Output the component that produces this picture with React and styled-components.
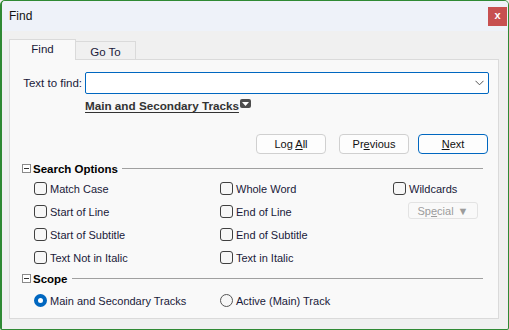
import React from 'react';
import styled, { createGlobalStyle } from 'styled-components';

const GlobalStyle = createGlobalStyle`
  html, body {
    margin: 0;
    padding: 0;
    background: #f0f0f0;
  }
  body {
    font-family: "Liberation Sans", Arial, sans-serif;
  }
  * {
    box-sizing: border-box;
  }
`;

const Window = styled.div`
  width: 509px;
  height: 330px;
  border: 1px solid #2f8a34;
  border-left-width: 2px;
  border-radius: 5px 5px 2px 2px;
  background: #f0f0f0;
  display: flex;
  flex-direction: column;
  overflow: hidden;
`;

const TitleBar = styled.div`
  height: 30px;
  flex: none;
  background: #eef2f9;
  display: flex;
  align-items: center;
  justify-content: space-between;
  padding-left: 7px;
  padding-right: 1px;
`;

const Title = styled.span`
  font-size: 12px;
  color: #111;
`;

const CloseButton = styled.div`
  width: 19px;
  height: 19px;
  background: #c75050;
  color: #fff;
  font-size: 11px;
  font-weight: bold;
  display: flex;
  align-items: center;
  justify-content: center;
  line-height: 1;
  padding-bottom: 1px;
`;

const Body = styled.div`
  flex: 1;
  display: flex;
  flex-direction: column;
  padding: 8px 9px 10px 7px;
`;

const Tabs = styled.div`
  display: flex;
  align-items: flex-end;
  height: 21px;
  margin-bottom: -1px;
`;

const Tab = styled.div`
  position: relative;
  z-index: ${(p) => (p.$active ? 2 : 1)};
  width: ${(p) => p.$width}px;
  height: ${(p) => (p.$active ? 21 : 19)}px;
  background: ${(p) => (p.$active ? '#f9f9f9' : '#f0f0f0')};
  border: 1px solid #dadada;
  border-bottom: ${(p) => (p.$active ? 'none' : '1px solid #dadada')};
  border-left: ${(p) => (p.$first ? '1px solid #dadada' : 'none')};
  font-size: 11.5px;
  color: #1a1a3a;
  display: flex;
  justify-content: center;
  padding-top: ${(p) => (p.$active ? 3 : 4)}px;
`;

const Panel = styled.div`
  flex: 1;
  background: #f9f9f9;
  border: 1px solid #dadada;
  display: flex;
  flex-direction: column;
  padding: 12px 9px 0 0;
`;

const FindRow = styled.div`
  display: grid;
  grid-template-columns: 75px 1fr;
  align-items: center;
  height: 22px;
`;

const Label = styled.label`
  font-size: 11.5px;
  color: #1a1a3a;
  text-align: right;
  padding-right: 3px;
`;

const ComboBox = styled.div`
  height: 22px;
  border: 1px solid #0067c0;
  border-radius: 2px;
  background: #fff;
  display: flex;
  align-items: center;
  justify-content: flex-end;
  padding-right: 4px;
`;

const ScopeLinkRow = styled.div`
  height: 15px;
  margin-top: 4px;
  padding-left: 75px;
  display: flex;
  align-items: center;
  gap: 1px;
`;

const ScopeLink = styled.span`
  font-size: 11.7px;
  font-weight: bold;
  color: #333;
  text-decoration: underline;
  text-underline-offset: 2px;
`;

const DropIcon = styled.span`
  width: 11px;
  height: 9px;
  border-radius: 2px;
  background: #4d4d4d;
  display: flex;
  align-items: center;
  justify-content: center;
  margin-top: -4px;
`;

const ButtonRow = styled.div`
  display: flex;
  justify-content: flex-end;
  margin-top: 21px;
  height: 20px;
  padding-right: 1px;
`;

const Button = styled.div`
  width: 70px;
  height: 20px;
  margin-left: ${(p) => p.$gap || 0}px;
  background: #fdfdfd;
  border: 1px solid ${(p) => (p.$primary ? '#0067c0' : '#d0d0d0')};
  border-radius: 4px;
  font-size: 11px;
  color: #111;
  display: flex;
  align-items: center;
  justify-content: center;
`;

const Key = styled.span`
  text-decoration: underline;
  text-underline-offset: 1px;
`;

const SectionHeader = styled.div`
  display: flex;
  align-items: center;
  height: 13px;
  margin-top: ${(p) => p.$top}px;
  padding-left: 12px;
  padding-right: 6px;
`;

const Collapse = styled.span`
  width: 9px;
  height: 9px;
  border: 1px solid #8a8a8a;
  background: #fff;
  display: flex;
  align-items: center;
  justify-content: center;
  margin-right: 2px;

  &::after {
    content: '';
    width: 5px;
    height: 1px;
    background: #333;
  }
`;

const SectionTitle = styled.span`
  font-size: 11.5px;
  font-weight: bold;
  color: #000;
`;

const Rule = styled.span`
  flex: 1;
  height: 1px;
  background: #a0a0a0;
  margin-left: 4px;
`;

const OptionGrid = styled.div`
  display: grid;
  grid-template-columns: 186px 173px 1fr;
  grid-auto-rows: 23px;
  margin-top: ${(p) => p.$top || 2}px;
  padding-left: 24px;
`;

const Option = styled.label`
  display: flex;
  align-items: center;
  gap: 3px;
  font-size: 11px;
  color: #1a1a3a;
`;

const CheckBox = styled.span`
  width: 13px;
  height: 13px;
  border: 1px solid #404040;
  border-radius: 3px;
  background: #f7f7f7;
  flex: none;
`;

const Radio = styled.span`
  width: 13px;
  height: 13px;
  border-radius: 50%;
  flex: none;
  border: ${(p) => (p.$checked ? '4px solid #0067c0' : '1px solid #555')};
  background: ${(p) => (p.$checked ? '#fff' : '#f7f7f7')};
`;

const SpecialButton = styled.div`
  width: 70px;
  height: 17px;
  margin: 2px 0 0 15px;
  border: 1px solid #e3e3e3;
  border-radius: 3px;
  background: #f9f9f9;
  color: #9c9c9c;
  font-size: 11px;
  display: flex;
  align-items: center;
  justify-content: center;
  gap: 4px;
`;

const Empty = styled.span``;

const options = [
  ['Match Case', 'Whole Word', 'Wildcards'],
  ['Start of Line', 'End of Line', null],
  ['Start of Subtitle', 'End of Subtitle', ''],
  ['Text Not in Italic', 'Text in Italic', ''],
];

function Check({ label }) {
  return (
    <Option>
      <CheckBox />
      {label}
    </Option>
  );
}

export default function App() {
  return (
    <>
      <GlobalStyle />
      <Window>
        <TitleBar>
          <Title>Find</Title>
          <CloseButton>x</CloseButton>
        </TitleBar>
        <Body>
          <Tabs>
            <Tab $active $first $width={67}>Find</Tab>
            <Tab $width={60}>Go To</Tab>
          </Tabs>
          <Panel>
            <FindRow>
              <Label>Text to find:</Label>
              <ComboBox>
                <svg width="9" height="6" viewBox="0 0 9 6">
                  <path d="M0.5 0.8 L4.5 4.8 L8.5 0.8" fill="none" stroke="#555" strokeWidth="1" />
                </svg>
              </ComboBox>
            </FindRow>
            <ScopeLinkRow>
              <ScopeLink>Main and Secondary Tracks</ScopeLink>
              <DropIcon>
                <svg width="7" height="4" viewBox="0 0 7 4">
                  <path d="M0 0 L7 0 L3.5 4 Z" fill="#fff" />
                </svg>
              </DropIcon>
            </ScopeLinkRow>
            <ButtonRow>
              <Button><span>Log <Key>A</Key>ll</span></Button>
              <Button $gap={13}><span>Pr<Key>e</Key>vious</span></Button>
              <Button $gap={9} $primary><span><Key>N</Key>ext</span></Button>
            </ButtonRow>
            <SectionHeader $top={8}>
              <Collapse />
              <SectionTitle>Search Options</SectionTitle>
              <Rule />
            </SectionHeader>
            <OptionGrid>
              {options.map((row, i) =>
                row.map((label, j) => {
                  if (label === null) {
                    return (
                      <SpecialButton key={`${i}-${j}`}>
                        <span>Sp<Key>e</Key>cial</span>
                        <span>▼</span>
                      </SpecialButton>
                    );
                  }
                  if (!label) return <Empty key={`${i}-${j}`} />;
                  return <Check key={`${i}-${j}`} label={label} />;
                })
              )}
            </OptionGrid>
            <SectionHeader $top={3}>
              <Collapse />
              <SectionTitle>Scope</SectionTitle>
              <Rule />
            </SectionHeader>
            <OptionGrid $top={4}>
              <Option>
                <Radio $checked />
                Main and Secondary Tracks
              </Option>
              <Option>
                <Radio />
                Active (Main) Track
              </Option>
            </OptionGrid>
          </Panel>
        </Body>
      </Window>
    </>
  );
}
